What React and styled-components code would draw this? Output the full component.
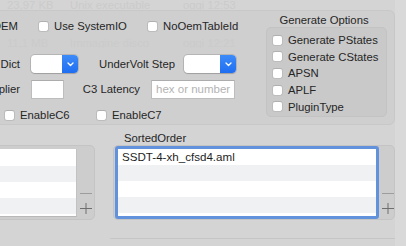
import styled, { createGlobalStyle } from "styled-components";

const GlobalStyle = createGlobalStyle`
  html, body {
    margin: 0;
    padding: 0;
  }
  body {
    background: #d4d4d4;
    font-family: "Liberation Sans", Arial, sans-serif;
    font-size: 11.3px;
    color: #262626;
  }
`;

const Window = styled.div`
  width: 406px;
  height: 246px;
  overflow: hidden;
  display: flex;
  background: #d4d4d4;
`;

const Content = styled.div`
  width: 395px;
  flex: none;
  display: flex;
  flex-direction: column;
`;

const SideStrip = styled.div`
  flex: 1;
  background: #d9d9d9;
`;

/* faint text of the window behind, seen through the translucent panel */
const Ghost = styled.div`
  display: grid;
  grid-template-columns: 63px 113px auto;
  height: ${(p) => p.$h}px;
  line-height: ${(p) => p.$h}px;
  padding-left: ${(p) => p.$x}px;
  margin-top: ${(p) => p.$top || 0}px;
  color: #cbcbcb;
  white-space: nowrap;
  overflow: hidden;
`;

const UpperBox = styled.div`
  box-sizing: border-box;
  margin-left: -12px;
  width: 407px;
  height: 115px;
  border: 1px solid #c8c8c8;
  border-radius: 6px;
  background: #cfcfcf;
  display: flex;
  justify-content: space-between;
`;

const LeftColumn = styled.div`
  display: flex;
  flex-direction: column;
  padding-top: 3px;
`;

const Row = styled.div`
  display: flex;
  align-items: center;
  height: 18px;
  margin-top: ${(p) => p.$top || 0}px;
  white-space: nowrap;
`;

const LabelCell = styled.div`
  width: ${(p) => p.$w}px;
  flex: none;
  display: flex;
  justify-content: flex-end;
  margin-right: ${(p) => p.$gap || 0}px;
`;

const CheckItem = styled.label`
  display: flex;
  align-items: center;
  gap: 5px;
  flex: none;
  width: ${(p) => (p.$w ? `${p.$w}px` : "auto")};
  margin-left: ${(p) => p.$left || 0}px;
  height: ${(p) => p.$h || 18}px;
`;

const Box = styled.span`
  box-sizing: border-box;
  width: 11px;
  height: 11px;
  flex: none;
  background: #fff;
  border: 1px solid #bcbcbc;
  border-top-color: #b0b0b0;
  border-radius: 3px;
`;

const Popup = styled.div`
  box-sizing: border-box;
  width: ${(p) => p.$w}px;
  height: 18px;
  flex: none;
  display: flex;
  margin-left: ${(p) => p.$left || 0}px;
  border-radius: 4px;
  overflow: hidden;
  background: #fff;
  box-shadow: 0 0 0 1px rgba(0, 0, 0, 0.12), 0 1px 1px rgba(0, 0, 0, 0.12);
`;

const PopupValue = styled.div`
  flex: 1;
`;

const PopupArrow = styled.div`
  width: 16px;
  display: flex;
  align-items: center;
  justify-content: center;
  background: linear-gradient(#3d8bf8, #1f6ef2);
`;

const TextField = styled.div`
  box-sizing: border-box;
  width: ${(p) => p.$w}px;
  height: 19px;
  flex: none;
  margin-left: ${(p) => p.$left || 0}px;
  padding: 0 4px;
  line-height: 17px;
  background: #fff;
  border: 1px solid #bdbdbd;
  border-top-color: #acacac;
  color: #b3b3b3;
  font-size: 11.5px;
`;

const OptionsColumn = styled.div`
  width: 121px;
  margin-right: 7px;
  padding-top: 2px;
  display: flex;
  flex-direction: column;
`;

const OptionsTitle = styled.div`
  height: 14px;
  line-height: 14px;
  text-align: center;
  padding-right: 5px;
`;

const OptionsGroup = styled.div`
  box-sizing: border-box;
  height: 90px;
  padding: 4px 0 0 5px;
  border: 1px solid #c3c3c3;
  border-radius: 5px;
  background: #c9c9c9;
`;

const LowerSection = styled.div`
  display: flex;
  align-items: flex-end;
  margin-top: 6px;
`;

const ListColumn = styled.div`
  display: flex;
  flex-direction: column;
  margin-left: ${(p) => p.$left}px;
  width: ${(p) => p.$w}px;
`;

const SectionLabel = styled.div`
  height: 14px;
  line-height: 14px;
  padding-left: 11px;
`;

const ListGroup = styled.div`
  box-sizing: border-box;
  height: 75px;
  display: flex;
  padding-left: ${(p) => (p.$focused ? 1 : 0)}px;
  border: 1px solid #c4c4c4;
  border-radius: 5px;
  background: #cdcdcd;
`;

const List = styled.div`
  box-sizing: border-box;
  width: ${(p) => p.$w}px;
  flex: none;
  display: flex;
  flex-direction: column;
  padding-top: 1px;
  background: #fff;
  overflow: hidden;
  ${(p) =>
    p.$focused
      ? `
    height: 73px;
    border: 3px solid #6392dd;
    border-radius: 3px;
    padding-top: 0;
  `
      : `
    height: 68px;
    margin-top: 3px;
    border-right: 1px solid #c2c2c2;
    border-bottom: 1px solid #b8b8b8;
  `}
`;

const ListRow = styled.div`
  height: 16px;
  flex: none;
  line-height: 16px;
  padding-left: 4px;
  background: ${(p) => (p.$alt ? "#f0f1f3" : "#fff")};
  color: #1e1e1e;
  font-size: 11.6px;
  white-space: nowrap;
`;

const Controls = styled.div`
  display: flex;
  flex-direction: column;
  justify-content: flex-end;
  gap: 4px;
  padding: 0 0 5px 3px;
`;

const Footer = styled.div`
  margin-top: 18px;
  margin-left: 110px;
  border-top: 1px solid #c6c6c6;
  flex: 1;
`;

const Chevron = () => (
  <svg width="7" height="5" viewBox="0 0 7 5">
    <polyline
      points="1,1 3.5,3.5 6,1"
      fill="none"
      stroke="#fff"
      strokeWidth="1.3"
      strokeLinecap="round"
      strokeLinejoin="round"
    />
  </svg>
);

const Minus = () => (
  <svg width="12" height="11" viewBox="0 0 12 11">
    <line x1="0" y1="5.5" x2="12" y2="5.5" stroke="#9d9d9d" strokeWidth="1" />
  </svg>
);

const Plus = () => (
  <svg width="12" height="11" viewBox="0 0 12 11">
    <line x1="0" y1="5.5" x2="12" y2="5.5" stroke="#6e6e6e" strokeWidth="1" />
    <line x1="6" y1="0" x2="6" y2="11" stroke="#6e6e6e" strokeWidth="1" />
  </svg>
);

const options = [
  "Generate PStates",
  "Generate CStates",
  "APSN",
  "APLF",
  "PluginType",
];

const ListRows = ({ items = [] }) =>
  [0, 1, 2, 3, 4].map((i) => (
    <ListRow key={i} $alt={i % 2 === 1}>
      {items[i] || ""}
    </ListRow>
  ));

const App = () => (
  <>
    <GlobalStyle />
    <Window>
      <Content>
        <Ghost $h={10} $x={7}>
          <span>23,97 KB</span>
          <span>Unix executable</span>
          <span>oggi 12:53</span>
        </Ghost>

        <UpperBox>
          <LeftColumn>
            <Row $top={3}>
              <LabelCell $w={29}>DropOEM</LabelCell>
              <CheckItem $left={20} $w={109}>
                <Box />
                Use SystemIO
              </CheckItem>
              <CheckItem>
                <Box />
                NoOemTableId
              </CheckItem>
            </Row>

            <Ghost $h={12} $x={18} $top={2}>
              <span>11,1 MB</span>
              <span>Immagine disco</span>
              <span>oggi 12:21</span>
            </Ghost>

            <Row $top={7}>
              <LabelCell $w={31} $gap={11}>
                Dict
              </LabelCell>
              <Popup $w={47}>
                <PopupValue />
                <PopupArrow>
                  <Chevron />
                </PopupArrow>
              </Popup>
              <LabelCell $w={97} $gap={9}>
                UnderVolt Step
              </LabelCell>
              <Popup $w={52}>
                <PopupValue />
                <PopupArrow>
                  <Chevron />
                </PopupArrow>
              </Popup>
            </Row>

            <Row $top={7}>
              <LabelCell $w={31} $gap={11}>
                Multiplier
              </LabelCell>
              <TextField $w={33} />
              <LabelCell $w={76} $gap={11}>
                C3 Latency
              </LabelCell>
              <TextField $w={84}>hex or number</TextField>
            </Row>

            <Row $top={8}>
              <CheckItem $left={15} $w={92}>
                <Box />
                EnableC6
              </CheckItem>
              <CheckItem>
                <Box />
                EnableC7
              </CheckItem>
            </Row>
          </LeftColumn>

          <OptionsColumn>
            <OptionsTitle>Generate Options</OptionsTitle>
            <OptionsGroup>
              {options.map((o) => (
                <CheckItem key={o} $h={16.6}>
                  <Box />
                  {o}
                </CheckItem>
              ))}
            </OptionsGroup>
          </OptionsColumn>
        </UpperBox>

        <LowerSection>
          <ListColumn $left={-20} $w={115}>
            <ListGroup>
              <List $w={96}>
                <ListRows />
              </List>
              <Controls>
                <Minus />
                <Plus />
              </Controls>
            </ListGroup>
          </ListColumn>

          <ListColumn $left={18} $w={282}>
            <SectionLabel>SortedOrder</SectionLabel>
            <ListGroup $focused>
              <List $w={264} $focused>
                <ListRows items={["SSDT-4-xh_cfsd4.aml"]} />
              </List>
              <Controls>
                <Minus />
                <Plus />
              </Controls>
            </ListGroup>
          </ListColumn>
        </LowerSection>

        <Footer />
      </Content>
      <SideStrip />
    </Window>
  </>
);

export default App;
